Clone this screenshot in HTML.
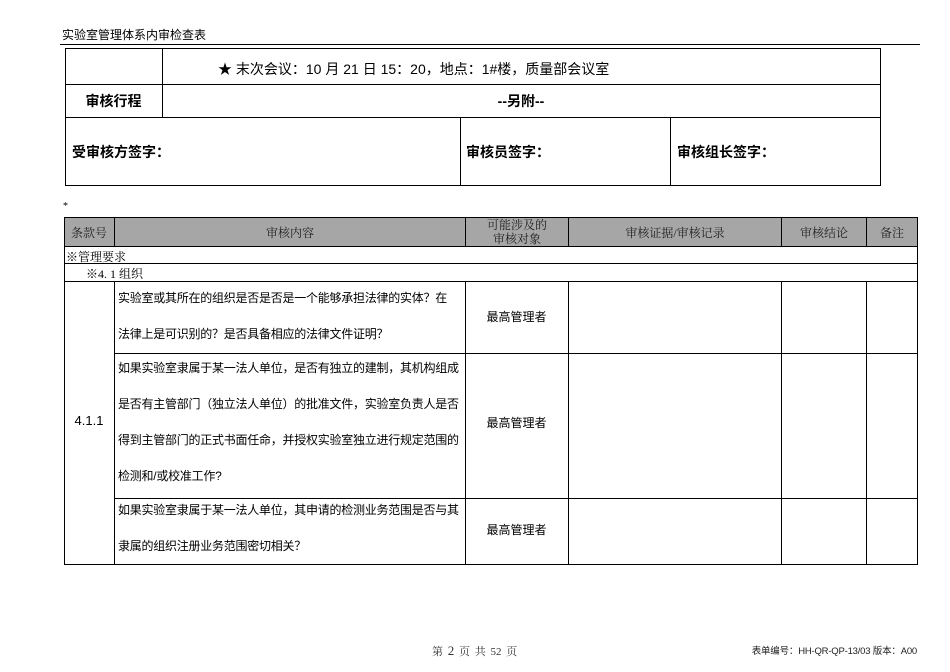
<!DOCTYPE html>
<html><head><meta charset="utf-8"><style>
body{margin:0;width:950px;height:672px;background:#fff;position:relative;font-family:"Liberation Sans","Noto Sans CJK SC",sans-serif;color:#000;overflow:hidden}
.a{position:absolute}
.l{position:absolute;background:#000}
.serif{font-family:"Liberation Serif","Noto Serif CJK SC",serif}
.t{font-size:12px;letter-spacing:-0.25px;line-height:36px;white-space:nowrap}
</style></head><body>
<div class="a" style="left:62px;top:26px;font-size:12px">实验室管理体系内审检查表</div>
<div class="l" style="left:60px;top:44px;width:860px;height:1px"></div>
<!-- top table -->
<div class="a" style="left:65px;top:48px;width:814px;height:136px;border:1px solid #000"></div>
<div class="l" style="left:65px;top:84px;width:815px;height:1px"></div>
<div class="l" style="left:65px;top:117px;width:815px;height:1px"></div>
<div class="l" style="left:162px;top:48px;width:1px;height:70px"></div>
<div class="l" style="left:460px;top:117px;width:1px;height:68px"></div>
<div class="l" style="left:670px;top:117px;width:1px;height:68px"></div>
<div class="a" style="left:218px;top:59px;font-size:14px;white-space:nowrap">★ 末次会议：10 月 21 日 15：20，地点：1#楼，质量部会议室</div>
<div class="a" style="left:65px;width:97px;top:91px;text-align:center;font-size:14px;font-weight:bold">审核行程</div>
<div class="a" style="left:163px;width:716px;top:91px;text-align:center;font-size:14px;font-weight:bold">--另附--</div>
<div class="a" style="left:72px;top:142px;font-size:14px;font-weight:bold">受审核方签字：</div>
<div class="a" style="left:466px;top:142px;font-size:14px;font-weight:bold">审核员签字：</div>
<div class="a" style="left:677px;top:142px;font-size:14px;font-weight:bold">审核组长签字：</div>
<div class="a serif" style="left:63px;top:201px;font-size:10px">*</div>
<!-- main table -->
<div class="a" style="left:64px;top:217px;width:853px;height:29px;background:#a6a6a6"></div>
<div class="a" style="left:64px;top:217px;width:852px;height:346px;border:1px solid #000"></div>
<div class="l" style="left:64px;top:246px;width:853px;height:1px"></div>
<div class="l" style="left:64px;top:263px;width:853px;height:1px"></div>
<div class="l" style="left:64px;top:281px;width:853px;height:1px"></div>
<div class="l" style="left:114px;top:353px;width:803px;height:1px"></div>
<div class="l" style="left:114px;top:498px;width:803px;height:1px"></div>
<div class="l" style="left:114px;top:217px;width:1px;height:29px"></div>
<div class="l" style="left:114px;top:281px;width:1px;height:283px"></div>
<div class="l" style="left:465px;top:217px;width:1px;height:29px"></div>
<div class="l" style="left:465px;top:281px;width:1px;height:283px"></div>
<div class="l" style="left:568px;top:217px;width:1px;height:29px"></div>
<div class="l" style="left:568px;top:281px;width:1px;height:283px"></div>
<div class="l" style="left:781px;top:217px;width:1px;height:29px"></div>
<div class="l" style="left:781px;top:281px;width:1px;height:283px"></div>
<div class="l" style="left:866px;top:217px;width:1px;height:29px"></div>
<div class="l" style="left:866px;top:281px;width:1px;height:283px"></div>
<div class="a serif" style="left:64px;width:50px;top:224px;text-align:center;font-size:12px;color:#222">条款号</div>
<div class="a serif" style="left:115px;width:350px;top:224px;text-align:center;font-size:12px;color:#222">审核内容</div>
<div class="a serif" style="left:466px;width:102px;top:218px;text-align:center;font-size:12px;line-height:14px;color:#222">可能涉及的<br>审核对象</div>
<div class="a serif" style="left:569px;width:212px;top:224px;text-align:center;font-size:12px;color:#222">审核证据/审核记录</div>
<div class="a serif" style="left:782px;width:84px;top:224px;text-align:center;font-size:12px;color:#222">审核结论</div>
<div class="a serif" style="left:867px;width:50px;top:224px;text-align:center;font-size:12px;color:#222">备注</div>
<div class="a serif" style="left:66px;top:248px;font-size:12px">※管理要求</div>
<div class="a serif" style="left:86px;top:265px;font-size:12px">※4. 1 组织</div>
<div class="a" style="left:64px;width:50px;top:413px;text-align:center;font-size:13px">4.1.1</div>
<div class="a t" style="left:118px;top:280px">实验室或其所在的组织是否是否是一个能够承担法律的实体？在<br>法律上是可识别的？是否具备相应的法律文件证明？</div>
<div class="a t" style="left:118px;top:350px">如果实验室隶属于某一法人单位，是否有独立的建制，其机构组成<br>是否有主管部门（独立法人单位）的批准文件，实验室负责人是否<br>得到主管部门的正式书面任命，并授权实验室独立进行规定范围的<br>检测和/或校准工作?</div>
<div class="a t" style="left:118px;top:492px">如果实验室隶属于某一法人单位，其申请的检测业务范围是否与其<br>隶属的组织注册业务范围密切相关？</div>
<div class="a" style="left:465px;width:103px;top:308px;text-align:center;font-size:12px">最高管理者</div>
<div class="a" style="left:465px;width:103px;top:414px;text-align:center;font-size:12px">最高管理者</div>
<div class="a" style="left:465px;width:103px;top:521px;text-align:center;font-size:12px">最高管理者</div>
<div class="a serif" style="left:432px;top:643px;font-size:11px;color:#333;word-spacing:2px">第 <span style="font-size:13px">2</span> 页 共 52 页</div>
<div class="a" style="right:33px;top:643px;font-size:9.5px;color:#222;white-space:nowrap;letter-spacing:-0.2px">表单编号：HH-QR-QP-13/03 版本：A00</div>
</body></html>
